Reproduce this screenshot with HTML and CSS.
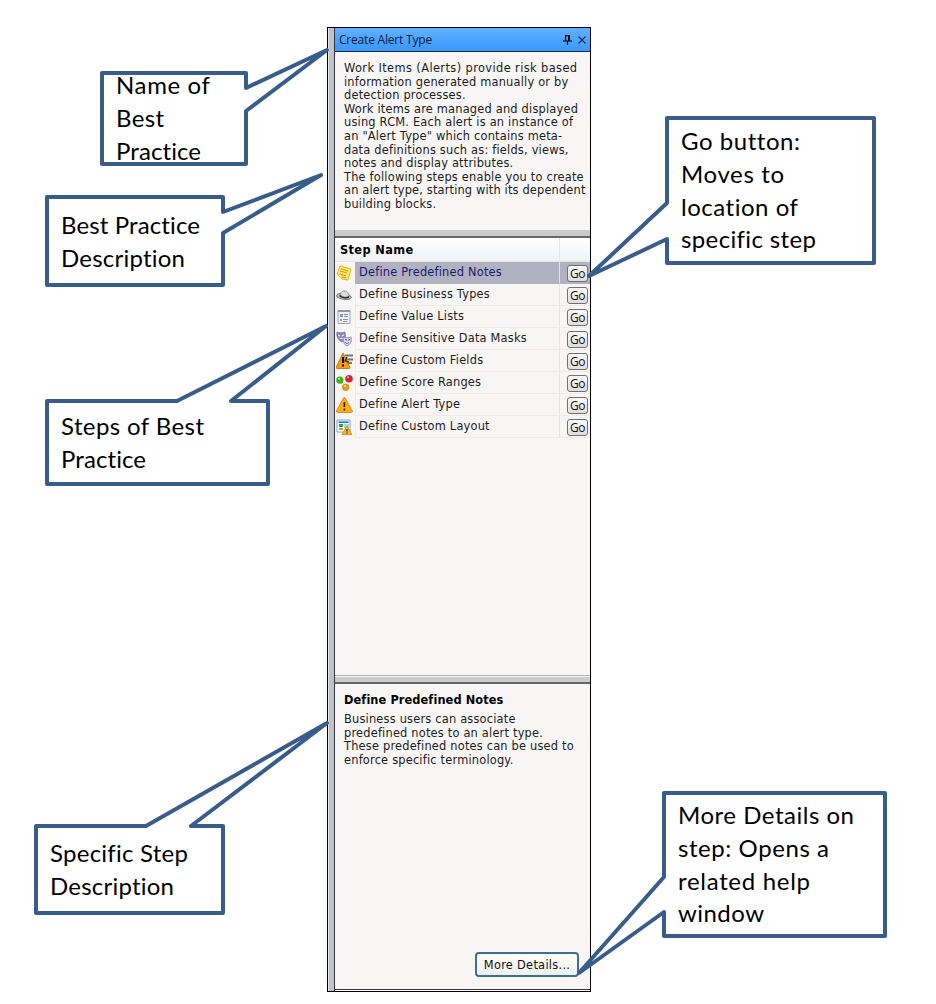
FILE: index.html
```
<!DOCTYPE html>
<html lang="en">
<head>
<meta charset="utf-8">
<title>Create Alert Type</title>
<link rel="stylesheet" href="styles.css">
</head>
<body>
<main class="stage">
  <section class="panel">
    <div class="rail"></div>
    <div class="content">
      <header class="titlebar">
        <span class="title">Create Alert Type</span>
        <svg class="pin" width="9" height="10" viewBox="0 0 9 10"><path d="M2 .7h5M2.6 1v5M0 6h9M4.5 6v4" stroke="#000" stroke-width="1.2" fill="none"/><path d="M5 1h2v5H5z"/></svg>
        <svg class="close" width="8" height="8" viewBox="0 0 8 8"><path d="M.5.5l7 7m0-7l-7 7" stroke="#102c50" stroke-width="1.1"/></svg>
      </header>
      <div class="intro"><span class="loose">Work Items (Alerts) provide risk based</span><br>information generated manually or by<br>detection processes.<br>Work items are managed and displayed<br>using RCM. Each alert is an instance of<br>an "Alert Type" which contains meta-<br>data definitions such as: fields, views,<br>notes and display attributes.<br>The following steps enable you to create<br><span class="tight">an alert type, starting with its dependent</span><br>building blocks.</div>
      <div class="splitter"></div>
      <div class="steps">
        <div class="row head"><b>Step Name</b><span class="action"></span></div>
        <div class="row selected"><span class="icon"><svg width="16" height="16" viewBox="0 0 16 16"><path d="M4 1l11 3-3 11-6-1-5-5z" fill="#ffe56a" stroke="#e5b817"/><path d="M5 4l7 2M4 6l7 2M4 9l6 2M6 12l4 1" stroke="#c99c19" fill="none"/><path d="M1 9l4 1 1 4z" fill="#fff6b5" stroke="#e5b817" stroke-width=".6"/></svg></span><span class="name">Define Predefined Notes</span><span class="action"><button>Go</button></span></div>
        <div class="row"><span class="icon"><svg width="16" height="16" viewBox="0 0 16 16"><ellipse cx="8" cy="9.5" rx="7.5" ry="2.8" transform="rotate(8 8 9)" fill="#b9bcbd" stroke="#606365" stroke-width=".8"/><path d="M4 8c1-4 3-4 5-4s4 2 4 6c-3 1-6 0-9-2z" fill="#dadcdd" stroke="#777" stroke-width=".7"/><path d="M4 8c2 2 6 3 9 1v2C9 12 5 11 3 9z" fill="#333"/></svg></span><span class="name">Define Business Types</span><span class="action"><button>Go</button></span></div>
        <div class="row"><span class="icon"><svg width="16" height="16" viewBox="0 0 16 16"><path d="M2 1.5h12v13H2z" fill="#f0f2f7" stroke="#9ba3b4"/><path d="M2 2h12" stroke="#8a98b5" stroke-width="2"/><path d="M4 5h3v3H4zM4 10h2v2H4z" fill="#8496ba"/><path d="M8 5.5h4M8 7.5h4M7 10.5h5M7 12.5h4" stroke="#8d94a3"/></svg></span><span class="name">Define Value Lists</span><span class="action"><button>Go</button></span></div>
        <div class="row"><span class="icon"><svg width="16" height="16" viewBox="0 0 16 16"><path d="M1 1c3 1 5 1 8 0 1 5 0 9-3 10C2 9 0 5 1 1z" fill="#8c8db9" stroke="#65669a" stroke-width=".6"/><path d="M2 4l2 1m2 0l2-1M4 8c1-1 2-1 3 0" stroke="#fff" fill="none"/><path d="M7 6c3 1 5 1 8 0 1 4 0 7-4 9-3-1-4-5-4-9z" fill="#d5daef" stroke="#7477a8" stroke-width=".7"/><path d="M9 8.5l2 .5m1 0l2-.5M9 11c1 2 3 2 4 0" stroke="#525782" fill="none"/></svg></span><span class="name">Define Sensitive Data Masks</span><span class="action"><button>Go</button></span></div>
        <div class="row"><span class="icon"><svg width="17" height="16" viewBox="0 0 17 16"><path d="M9 2.5h8M9 6.5h8M9 10h7" stroke="#77736d" stroke-width="2"/><path d="M7 0l7 14.5q0 1-1 1H1q-1 0-1-1z" fill="#f99a0b" stroke="#b96800" stroke-width=".8"/><path d="M7 4v6M7 11.5v2" stroke="#171005" stroke-width="2"/><path d="M11 4l-2 4 4 1" stroke="#4d3821" fill="none" stroke-width="1.5"/></svg></span><span class="name">Define Custom Fields</span><span class="action"><button>Go</button></span></div>
        <div class="row"><span class="icon"><svg width="17" height="16" viewBox="0 0 17 16"><circle cx="3.8" cy="5.2" r="3.6" fill="#43b21a"/><circle cx="13" cy="3.8" r="3.8" fill="#d72431"/><circle cx="9.7" cy="12.3" r="3.7" fill="#e19a20"/><g fill="#fff" fill-opacity=".6"><circle cx="3" cy="3.8" r="1.1"/><circle cx="12" cy="2.3" r="1.1"/><circle cx="9" cy="11" r="1.1"/></g></svg></span><span class="name">Define Score Ranges</span><span class="action"><button>Go</button></span></div>
        <div class="row"><span class="icon"><svg width="17" height="16" viewBox="0 0 17 16"><path d="M8.3.4q.5 0 .8.6L16.4 14q0 1.3-1 1.5h-14Q.4 15.3.4 14L7.5 1q.3-.6.8-.6z" fill="#ffad18" stroke="#d47700" stroke-width=".8"/><path d="M8.4 5v5M8.4 11.5v2" stroke="#3a2400" stroke-width="1.7"/></svg></span><span class="name">Define Alert Type</span><span class="action"><button>Go</button></span></div>
        <div class="row"><span class="icon"><svg width="16" height="16" viewBox="0 0 16 16"><path d="M1 1h13v12H1z" fill="#fff" stroke="#76a8d5"/><path d="M2.5 3.2h10" stroke="#2b73cb" stroke-width="1.6"/><path d="M3 5h4v3H3z" fill="#1cac45"/><path d="M8 6h5M8 8h5" stroke="#62a2db"/><path d="M3 9h4v2H3z" fill="#e79221"/><path d="M11 7l5 8.5H6z" fill="#ffb021" stroke="#d07c04" stroke-width=".7"/><path d="M11 10v2.5M11 13.5v1" stroke="#432600" stroke-width="1.2"/></svg></span><span class="name">Define Custom Layout</span><span class="action"><button>Go</button></span></div>
      </div>
      <div class="splitter lower"></div>
      <div class="details">
        <h2>Define Predefined Notes</h2>
        <p>Business users can associate<br>predefined notes to an alert type.<br>These predefined notes can be used to<br>enforce specific terminology.</p>
        <button class="more">More Details...</button>
      </div>
    </div>
  </section>
  <svg class="annotations" width="936" height="1004" viewBox="0 0 936 1004">
    <g class="bubble">
      <path d="M102 73H246V88L327 50L246 111V164H102Z"/>
      <path d="M47 197H223V212L321 175L223 233V285H47Z"/>
      <path d="M47 401H177L326 326L231 401H268V484H47Z"/>
      <path d="M36 826H146L327 723L191 826H223V913H36Z"/>
      <path d="M667 118H874V263H667V239L589 276L667 203Z"/>
      <path d="M664 793H885V936H664V912L579 973L664 877Z"/>
    </g>
    <g class="note">
      <text x="116" y="94" textLength="94">Name of</text><text x="116" y="127" textLength="48">Best</text><text x="116" y="160" textLength="85">Practice</text>
      <text x="61" y="234" textLength="139">Best Practice</text><text x="61" y="267" textLength="124">Description</text>
      <text x="61" y="435" textLength="143">Steps of Best</text><text x="61" y="468" textLength="85">Practice</text>
      <text x="50" y="862" textLength="138">Specific Step</text><text x="50" y="895" textLength="124">Description</text>
      <text x="681" y="150" textLength="119">Go button:</text><text x="681" y="183" textLength="103">Moves to</text><text x="681" y="216" textLength="117">location of</text><text x="681" y="248" textLength="135">specific step</text>
      <text x="678" y="824" textLength="176">More Details on</text><text x="678" y="857" textLength="151">step: Opens a</text><text x="678" y="890" textLength="132">related help</text><text x="678" y="922" textLength="86">window</text>
    </g>
  </svg>
</main>
</body>
</html>
```
FILE: styles.css
```
* { box-sizing: border-box; }
body { margin: 0; background: #fff; color: #1c1c1c; font: 11.4px/13.6px "DejaVu Sans", Verdana, sans-serif; letter-spacing: .2px; }
.stage { position: relative; width: 936px; height: 1004px; padding: 27px 0 0 327px; overflow: hidden; }
.panel { display: flex; width: 264px; height: 965px; border: 1px solid #000; background: #f7f6f5; }
.rail { width: 7px; flex: none; background: #c1c1c8; border-left: 1px solid #e6e6e8; border-right: 1px solid #34363f; }
.content { flex: 1; min-width: 0; display: flex; flex-direction: column; border-bottom: 1px solid #fff; box-shadow: inset 0 -1px #34363b; }
.titlebar { height: 24px; flex: none; display: flex; align-items: center; padding: 1px 4px 0 4px; background: linear-gradient(#62b0fe, #3898fd); border-bottom: 1px solid #202a35; color: #0b203b; }
.title { font: 12px/18px "Open Sans", "Noto Sans", sans-serif; letter-spacing: -.2px; flex: 1; }
.pin { margin-right: 6px; }
.intro { height: 178px; flex: none; padding: 10px 0 0 9px; white-space: nowrap; }
.loose { letter-spacing: .4px; }
.tight { letter-spacing: .16px; }
.splitter { height: 8px; flex: none; background: #cbcbcb; border-bottom: 2px solid #64676d; }
.steps { height: 437px; flex: none; }
.row { height: 22px; display: flex; align-items: stretch; line-height: 21px; white-space: nowrap; }
.head { height: 24px; background: linear-gradient(#fff, #f1f2f4); border-bottom: 1px solid #e6e6e6; color: #000; line-height: 25px; letter-spacing: .35px; }
.head b { flex: 1; padding-left: 5px; }
.icon { width: 20px; display: flex; align-items: center; padding-left: 1px; flex: none; }
.name { flex: 1; padding-left: 3px; border-bottom: 1px solid #eeeceb; border-left: 1px solid #eeeceb; }
.action { width: 31px; display: flex; align-items: center; justify-content: flex-end; padding-right: 2px; border-left: 1px solid #e5e5e5; border-bottom: 1px solid #eeeceb; }
.action button { width: 21px; height: 17px; margin-top: 1px; padding: 0; border: 1px solid #707070; border-radius: 3px; background: linear-gradient(#fafafa, #dedee0); font: 12px/15px "Open Sans", sans-serif; letter-spacing: -.5px; color: #111; }
.selected .name, .selected .action { background: #b1b1bf; color: #191970; border-bottom-color: #b1b1bf; }
.selected .name { border-left-color: #b1b1bf; }
.lower { height: 9px; border-top: 1px solid #aeb0ba; box-shadow: inset 0 1px #f7f6f5; }
.details { flex: 1; display: flex; flex-direction: column; padding: 9px 11px 13px 9px; white-space: nowrap; }
h2 { margin: 0 0 6px; font-size: 11.4px; line-height: 14px; letter-spacing: .08px; color: #000; }
p { margin: 0; }
.more { margin-top: auto; align-self: flex-end; width: 104px; height: 25px; padding: 0; border: 2px solid #3e6d9c; border-radius: 4px; background: linear-gradient(#fff, #f0f0eb); color: #111; font: 11.4px "DejaVu Sans", sans-serif; letter-spacing: .28px; }
.annotations { position: absolute; left: 0; top: 0; }
.bubble path { fill: #fff; stroke: #385d8a; stroke-width: 4; stroke-linejoin: round; }
.note { font: 24px Lato, "Open Sans", sans-serif; font-variant-ligatures: none; letter-spacing: 0; fill: #000; }
```
